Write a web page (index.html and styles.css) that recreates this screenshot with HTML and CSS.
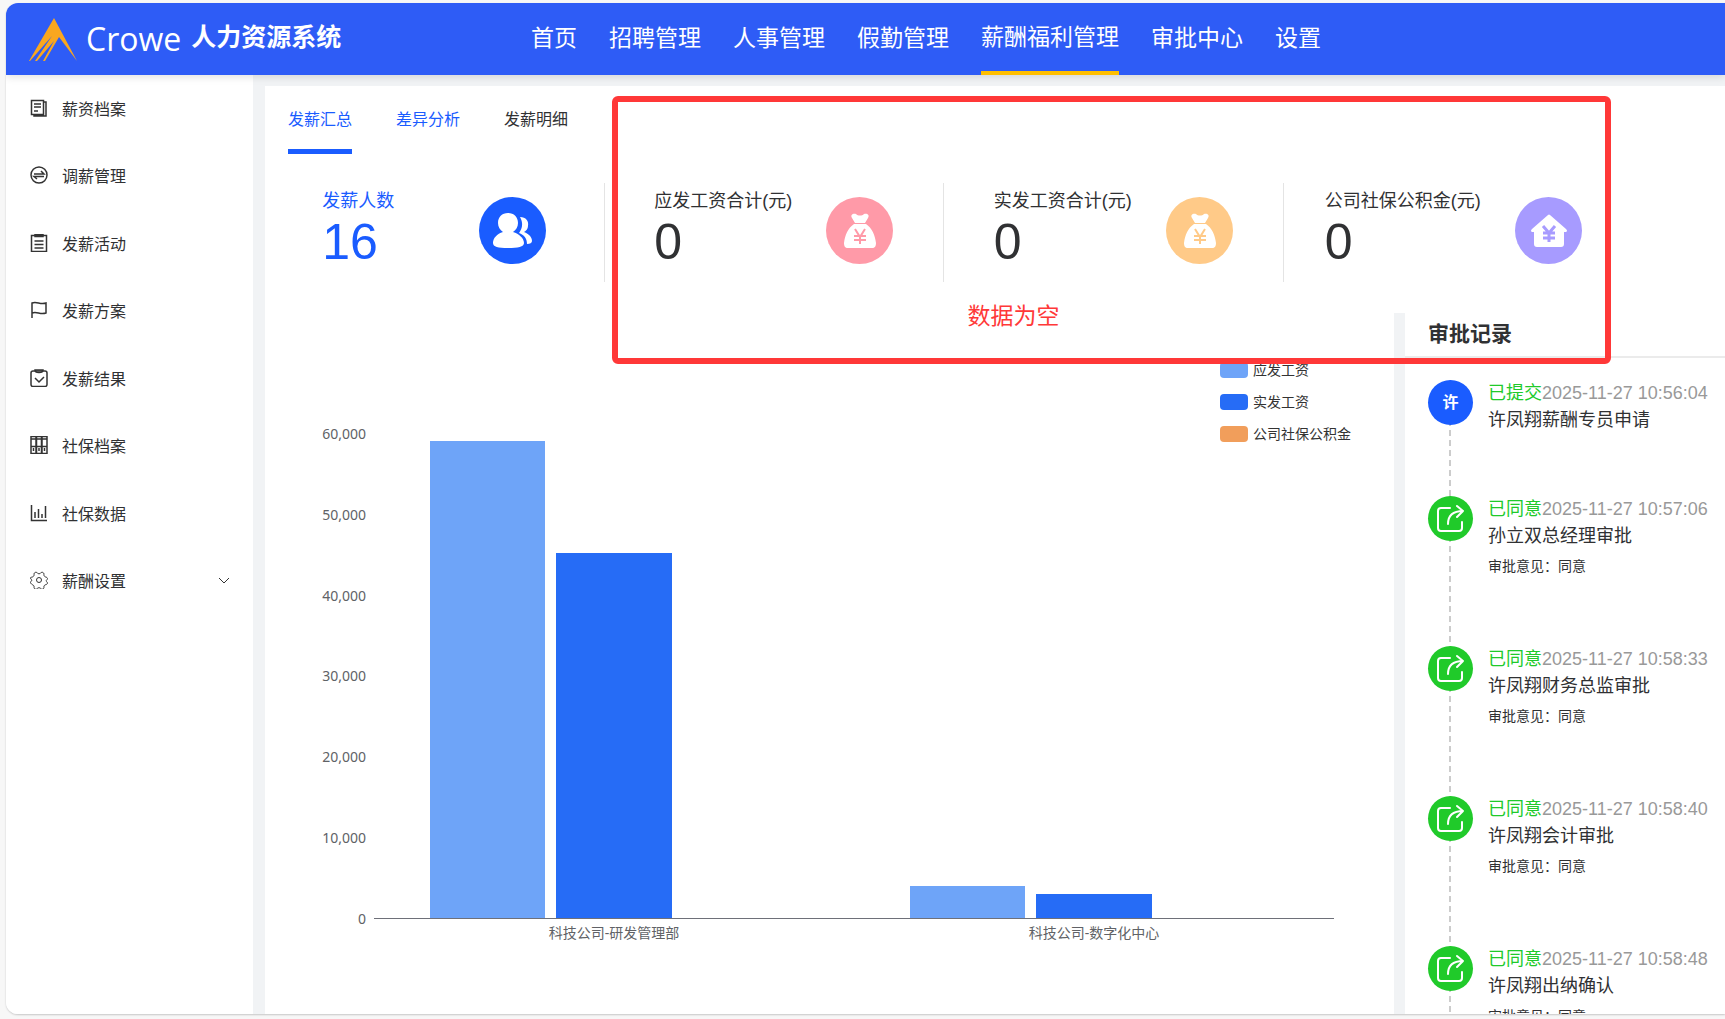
FILE: index.html
```html
<!DOCTYPE html>
<html lang="zh-CN">
<head>
  <meta charset="UTF-8" />
  <meta name="viewport" content="width=device-width, initial-scale=1" />
  <title>Crowe 人力资源系统</title>
  <link rel="stylesheet" href="styles.css">
</head>
<body>
  <!-- shared icons -->
  <svg class="sprite" aria-hidden="true">
    <symbol id="icon-share" viewBox="0 0 45 45">
      <path d="M22 12H13a3 3 0 0 0-3 3v17a3 3 0 0 0 3 3h18a3 3 0 0 0 3-3v-6" />
      <path d="M20 28c0-8 4-13 15-13M29 10l6 5-6 6" />
    </symbol>
    <symbol id="icon-bag" viewBox="0 0 67 67">
      <path fill="#fff" d="M26 21c-2-3 1-5 4-4 2 2 6 2 8 0 3-1 6 1 4 4l-3 5H29zM28 27h12c6 4 9 11 10 19 0 3-1 5-4 5H22c-3 0-4-2-4-5 1-8 4-15 10-19z" />
      <path class="yen" d="M29 32l5 8 5-8M28 39h12M28 43h12M34 39v8" />
    </symbol>
  </svg>

  <div class="window">
    <header>
      <div class="brand">
        <svg class="logo" viewBox="0 0 48 43">
          <path fill="#f9a71f" d="M25 0L48 43 30 19 16 43h-2l11-20L8 43H6l17-25L1 43H0z" />
        </svg>
        <span class="brand-name">Crowe</span>
        <h1>人力资源系统</h1>
      </div>
      <nav class="top-nav">
        <a href="#">首页</a>
        <a href="#">招聘管理</a>
        <a href="#">人事管理</a>
        <a href="#">假勤管理</a>
        <a href="#" class="active">薪酬福利管理</a>
        <a href="#">审批中心</a>
        <a href="#">设置</a>
      </nav>
    </header>

    <div class="layout">
      <nav class="sidebar">
        <div class="menu">
          <a href="#">
            <svg viewBox="0 0 18 18"><path d="M1.500 1.500h12v14h-12zM14 3h2v14H4v-1.500M4 5h7M4 8h7M4 12h4" /></svg>
            <span>薪资档案</span>
          </a>
          <a href="#">
            <svg viewBox="0 0 18 18"><circle cx="9" cy="9" r="8" /><path d="M4 8h10l-3-3M14 10.500H4l3 2.500" /></svg>
            <span>调薪管理</span>
          </a>
          <a href="#">
            <svg viewBox="0 0 18 18"><path d="M1.500 1.500h15v16h-15zM5 .5h8v2H5zM4.500 7h9M4.500 10.500h9M4.500 14h9" /></svg>
            <span>发薪活动</span>
          </a>
          <a href="#">
            <svg viewBox="0 0 18 18"><path d="M2 17V2c5-2 8 2 14 0v10c-6 2-9-2-14 0" /></svg>
            <span>发薪方案</span>
          </a>
          <a href="#">
            <svg viewBox="0 0 18 18"><rect x="1" y="2" width="16" height="15.500" rx="2" /><path d="M5 1h8c0 2-1 2.500-4 2.500S5 3 5 1zM5 9l4 4 5-5" /></svg>
            <span>发薪结果</span>
          </a>
          <a href="#">
            <svg viewBox="0 0 18 18"><path d="M1 .5h5v17H1zM6.500 .5h5v17h-5zM12 .5h5v17h-5zM1 3h16M1 10.500h16M3.500 12v3M9 12v3M14.500 12v3" /></svg>
            <span>社保档案</span>
          </a>
          <a href="#">
            <svg viewBox="0 0 18 18"><path d="M1.500 1v15.500H17M5 14V8M8.500 14V5M12 14v-4M15.500 14V2" /></svg>
            <span>社保数据</span>
          </a>
          <a href="#">
            <svg class="thin" viewBox="0 0 18 18"><circle cx="9" cy="9" r="2.500" /><path d="M5 1.500c1-.6 2 0 2.400.6.8.9 2.400.9 3.200 0 .5-.6 1.400-1.200 2.400-.6s1 1.500.9 2.300c0 1.200.9 2 2 2.300.9.200 1.600.8 1.600 1.500s-.5 1-.9 1.500c-.5.500-.5 1 0 1.500.4.500.9.800.9 1.500s-.7 1.300-1.600 1.500c-1.100.3-2 1-2 2.200.1.800.1 1.700-.9 2.200s-1.900 0-2.400-.6c-.8-.9-2.400-.9-3.200 0-.5.600-1.400 1.100-2.400.6s-1-1.400-.9-2.200c0-1.200-.9-1.900-2-2.200C1.200 12.700.5 12.200.5 11.500s.5-1 .9-1.500c.5-.5.5-1 0-1.500C1 8 .5 7.700.5 7s.7-.7 1.600-.9c1.100-.3 2-1.100 2-2.300C4 3 4 2 5 1.500z" /></svg>
            <span>薪酬设置</span>
            <svg class="arrow" viewBox="0 0 12 12"><path d="M1 4l5 5 5-5" /></svg>
          </a>
        </div>
      </nav>

      <main>
        <div class="tabs">
          <button type="button" class="current">发薪汇总</button>
          <button type="button" class="visited">差异分析</button>
          <button type="button">发薪明细</button>
        </div>

        <section class="stats">
          <div class="stat selected">
            <div class="stat-text">
              <div class="stat-label">发薪人数</div>
              <div class="stat-value">16</div>
            </div>
            <svg class="stat-icon" viewBox="0 0 67 67">
              <circle cx="33.500" cy="33.500" r="33.500" fill="#1a5cff" />
              <path fill="#fff" d="M41 20c6 0 9 4 8 9 0 3-2 5-4 6 5 2 8 5 8 9 0 2-2 3-5 3 0-6-3-9-8-11 4-5 4-11 1-16z" />
              <path fill="#fff" d="M29 16c6 0 10 4 10 10 0 4-2 7-5 9 6 2 11 6 11 11 0 4-6 5-16 5s-15-1-15-5c0-5 4-9 10-11-3-2-5-5-5-9 0-6 4-10 10-10z" />
            </svg>
          </div>
          <div class="stat">
            <div class="stat-text">
              <div class="stat-label">应发工资合计(元)</div>
              <div class="stat-value">0</div>
            </div>
            <svg class="stat-icon pink" viewBox="0 0 67 67">
              <circle cx="33.500" cy="33.500" r="33.500" fill="currentColor" />
              <use href="#icon-bag" />
            </svg>
          </div>
          <div class="stat">
            <div class="stat-text">
              <div class="stat-label">实发工资合计(元)</div>
              <div class="stat-value">0</div>
            </div>
            <svg class="stat-icon orange" viewBox="0 0 67 67">
              <circle cx="33.500" cy="33.500" r="33.500" fill="currentColor" />
              <use href="#icon-bag" />
            </svg>
          </div>
          <div class="stat">
            <div class="stat-text">
              <div class="stat-label">公司社保公积金(元)</div>
              <div class="stat-value">0</div>
            </div>
            <svg class="stat-icon purple" viewBox="0 0 67 67">
              <circle cx="33.500" cy="33.500" r="33.500" fill="currentColor" />
              <path fill="#fff" d="M33 18q1-1 2 0l16 14q2 2 0 3h-2v12q0 3-3 3H22q-3 0-3-3V35h-2q-2-1 0-3z" />
              <path class="yen heavy" d="M28 29l6 7 6-7M28 36h12M28 41h12M34 36v9" />
            </svg>
          </div>
        </section>

        <div class="panels">
          <section class="chart">
            <ul class="legend">
              <li><i class="due"></i>应发工资</li>
              <li><i class="paid"></i>实发工资</li>
              <li><i class="fund"></i>公司社保公积金</li>
            </ul>
            <div class="y-axis">
              <span>60,000</span>
              <span>50,000</span>
              <span>40,000</span>
              <span>30,000</span>
              <span>20,000</span>
              <span>10,000</span>
              <span>0</span>
            </div>
            <div class="plot">
              <div class="group">
                <div class="bar due" style="height: 98.6%"></div>
                <div class="bar paid" style="height: 75.4%"></div>
                <div class="bar fund" style="height: 0%"></div>
              </div>
              <div class="group">
                <div class="bar due" style="height: 6.7%"></div>
                <div class="bar paid" style="height: 5%"></div>
                <div class="bar fund" style="height: 0%"></div>
              </div>
            </div>
            <div class="x-axis">
              <span>科技公司-研发管理部</span>
              <span>科技公司-数字化中心</span>
            </div>
          </section>

          <section class="records">
            <h2>审批记录</h2>
            <ol>
              <li class="short">
                <div class="avatar">许</div>
                <div>
                  <p><span class="state">已提交</span><time>2025-11-27 10:56:04</time></p>
                  <p>许凤翔薪酬专员申请</p>
                </div>
              </li>
              <li>
                <div class="avatar done"><svg><use href="#icon-share" /></svg></div>
                <div>
                  <p><span class="state">已同意</span><time>2025-11-27 10:57:06</time></p>
                  <p>孙立双总经理审批</p>
                  <p class="opinion">审批意见：同意</p>
                </div>
              </li>
              <li>
                <div class="avatar done"><svg><use href="#icon-share" /></svg></div>
                <div>
                  <p><span class="state">已同意</span><time>2025-11-27 10:58:33</time></p>
                  <p>许凤翔财务总监审批</p>
                  <p class="opinion">审批意见：同意</p>
                </div>
              </li>
              <li>
                <div class="avatar done"><svg><use href="#icon-share" /></svg></div>
                <div>
                  <p><span class="state">已同意</span><time>2025-11-27 10:58:40</time></p>
                  <p>许凤翔会计审批</p>
                  <p class="opinion">审批意见：同意</p>
                </div>
              </li>
              <li>
                <div class="avatar done"><svg><use href="#icon-share" /></svg></div>
                <div>
                  <p><span class="state">已同意</span><time>2025-11-27 10:58:48</time></p>
                  <p>许凤翔出纳确认</p>
                  <p class="opinion">审批意见：同意</p>
                </div>
              </li>
            </ol>
          </section>
        </div>

        <div class="callout">数据为空</div>
      </main>
    </div>
  </div>
</body>
</html>
```
FILE: styles.css
```css
* {
  box-sizing: border-box;
}
body {
  font-family: "Liberation Sans", "Noto Sans CJK SC", sans-serif;
  font-size: 16px;
  color: #303133;
  background-color: #f7f7f7;
  margin: 0;
  padding: 3px 0 5px 6px;
  height: 100vh;
  overflow: hidden;
}
h1, h2, p, ul, ol {
  margin: 0;
  padding: 0;
}
ul, ol {
  list-style: none;
}
a {
  color: inherit;
  text-decoration: none;
}
.sprite {
  position: absolute;
  width: 0;
  height: 0;
}
.window {
  display: flex;
  flex-direction: column;
  height: 100%;
  overflow: hidden;
  border-radius: 12px 0 0 12px;
  background-color: white;
  box-shadow: 0 1px 2px rgba(0,0,0,0.2);
}

/* header */
header {
  flex: 0 0 72px;
  display: flex;
  background-color: #2e5cf6;
  color: white;
  box-shadow: 0 2px 8px rgba(0,0,0,0.12);
  z-index: 1;
}
.brand {
  flex: 0 0 525px;
  display: flex;
  align-items: center;
  padding-left: 23px;
}
.logo {
  width: 48px;
  height: 43px;
}
.brand-name {
  font-family: "Open Sans", sans-serif;
  font-size: 32px;
  line-height: 40px;
  margin-left: 9px;
}
h1 {
  font-size: 25px;
  font-weight: bold;
  line-height: 32px;
  margin-left: 10px;
  padding-bottom: 4px;
}
.top-nav {
  display: flex;
  gap: 32px;
  font-size: 23px;
}
.top-nav a {
  display: flex;
  align-items: center;
  white-space: nowrap;
  padding-bottom: 6px;
}
.top-nav a.active {
  padding-bottom: 4px;
  border-bottom: 4px solid #ffbf00;
}

.layout {
  flex: 1;
  min-height: 0;
  display: flex;
  background-color: #f1f3f5;
}

/* sidebar */
.sidebar {
  flex: 0 0 247px;
  background-color: white;
}
.menu {
  display: grid;
  grid-auto-rows: 1fr;
  height: 540px;
}
.menu a {
  display: flex;
  align-items: center;
  padding: 0 23px 2px 24px;
}
.menu svg {
  width: 18px;
  height: 18px;
  margin-right: 14px;
  fill: none;
  stroke: #333;
  stroke-width: 1.5;
}
.menu svg.thin {
  stroke-width: 1;
}
.menu svg.arrow {
  width: 12px;
  height: 12px;
  margin: 0 0 0 auto;
  stroke-width: 1;
}

main {
  flex: 1;
  min-width: 0;
  display: flex;
  flex-direction: column;
  position: relative;
  margin: 11px 0 0 12px;
  background-color: white;
}

/* tabs */
.tabs {
  display: flex;
  gap: 44px;
  height: 68px;
  padding-left: 23px;
}
.tabs button {
  border: none;
  border-bottom: 5px solid transparent;
  background: none;
  padding: 0;
  font: inherit;
  color: inherit;
  cursor: pointer;
}
.tabs .visited {
  color: #1a5cff;
}
.tabs .current {
  color: #1a5cff;
  border-color: #1a5cff;
}

/* totals */
.stats {
  display: grid;
  grid-template-columns: repeat(4, 1fr);
  margin: 29px 102px 31px 0;
}
.stat {
  display: flex;
  justify-content: center;
  gap: 34px;
  height: 99px;
  border-right: 1px solid #e4e4e4;
}
.stat:last-child {
  border-right: none;
}
.stat.selected {
  color: #1a5cff;
}
.stat-text {
  min-width: 123px;
}
.stat-label {
  font-size: 18px;
  line-height: 36px;
  white-space: nowrap;
}
.stat-value {
  font-size: 50px;
  line-height: 46px;
}
.stat-icon {
  flex: 0 0 67px;
  height: 67px;
  margin-top: 14px;
}
.pink {
  color: #ff9aa8;
}
.orange {
  color: #ffca88;
}
.purple {
  color: #a79bff;
}
.yen {
  fill: none;
  stroke: currentColor;
  stroke-width: 2;
}
.yen.heavy {
  stroke-width: 3;
}

.panels {
  flex: 1;
  min-height: 0;
  display: flex;
}

/* chart */
.chart {
  flex: 1;
  position: relative;
  display: grid;
  grid-template-columns: 101px 1fr;
  grid-template-rows: 1fr 28px;
  column-gap: 8px;
  padding: 121px 60px 67px 0;
  font-family: "Noto Sans", "Noto Sans CJK SC", sans-serif;
  font-size: 14px;
  line-height: 18px;
  color: #606266;
}
.y-axis {
  display: flex;
  flex-direction: column;
  justify-content: space-between;
  margin: -9px 0;
  text-align: right;
}
.plot {
  display: flex;
  border-bottom: 1px solid #6e7079;
}
.group {
  flex: 1;
  display: flex;
  align-items: flex-end;
  gap: 11px;
  padding: 0 56px;
}
.bar {
  flex: 1;
}
.due {
  background-color: #6ea4f8;
}
.paid {
  background-color: #266cf6;
}
.fund {
  background-color: #f19e5b;
}
.x-axis {
  grid-column: 2;
  display: flex;
  align-items: center;
}
.x-axis span {
  flex: 1;
  text-align: center;
}
.legend {
  position: absolute;
  top: 48px;
  right: 43px;
  color: #333;
}
.legend li {
  display: flex;
  align-items: center;
  height: 18px;
  margin-bottom: 14px;
}
.legend i {
  width: 28px;
  height: 16px;
  margin-right: 5px;
  border-radius: 4px;
}

/* approval records */
.records {
  flex: 0 0 331px;
  overflow: hidden;
  border-left: 11px solid #f1f3f5;
}
h2 {
  height: 45px;
  padding-left: 23px;
  border-bottom: 2px solid #ebebeb;
  font-size: 21px;
  line-height: 42px;
}
.records ol {
  padding: 22px 0 0 23px;
  font-size: 18px;
  line-height: 27px;
}
.records li {
  display: flex;
  gap: 15px;
  height: 150px;
  white-space: nowrap;
  background: repeating-linear-gradient(to bottom, #ccc 0 6px, transparent 6px 10px) 21px 0 / 2px 100% no-repeat;
}
.records li.short {
  height: 116px;
}
.avatar {
  flex: 0 0 45px;
  height: 45px;
  border-radius: 50%;
  background-color: #1a5cff;
  color: white;
  font-size: 16px;
  font-weight: bold;
  line-height: 45px;
  text-align: center;
}
.avatar.done {
  background-color: #20ca2a;
}
.avatar svg {
  display: block;
  width: 45px;
  height: 45px;
  fill: none;
  stroke: white;
  stroke-width: 2;
  stroke-linecap: round;
  stroke-linejoin: round;
}
.state {
  color: #20ca2a;
}
time {
  color: #999;
}
.opinion {
  font-size: 14px;
  margin-top: 3px;
}

/* note drawn over the empty totals */
.callout {
  position: absolute;
  top: 10px;
  left: 347px;
  right: 114px;
  height: 268px;
  padding: 202px 196px 0 0;
  border: 6px solid #ff3838;
  border-radius: 6px;
  color: #ff3838;
  font-size: 23px;
  line-height: 24px;
  text-align: center;
}
```
